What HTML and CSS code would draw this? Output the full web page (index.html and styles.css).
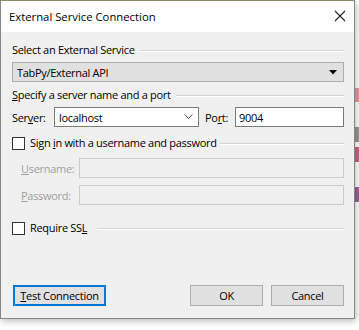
FILE: index.html
```html
<!DOCTYPE html>
<html>
<head>
<meta charset="utf-8">
<link rel="stylesheet" href="styles.css">
</head>
<body>
<div class="stage">
  <div class="window">
    <div class="titlebar">
      <span class="title">External Service Connection</span>
      <svg class="close" width="12" height="12" viewBox="0 0 12 12"><path d="M1 1 L11 11 M11 1 L1 11" stroke="#222" stroke-width="1.1" fill="none"/></svg>
    </div>
    <div class="content">
      <div class="group-head"><span>Select an External Service</span><span class="rule"></span></div>
      <div class="select">
        <span>TabPy/External API</span>
        <svg width="8" height="5" viewBox="0 0 8 5"><path d="M0 0 H8 L4 4.5 Z" fill="#000"/></svg>
      </div>
      <div class="group-head g2"><span><u>S</u>pecify a server name and a port</span><span class="rule"></span></div>
      <div class="server-row">
        <span class="lbl srv">Ser<u>v</u>er:</span>
        <div class="combo">
          <span>localhost</span>
          <svg width="9" height="6" viewBox="0 0 9 6"><path d="M0.5 0.5 L4.5 4.5 L8.5 0.5" stroke="#555" stroke-width="1" fill="none"/></svg>
        </div>
        <span class="lbl port">Po<u>r</u>t:</span>
        <div class="input port-input">9004</div>
      </div>
      <div class="check-head c1"><span class="box"></span><span>Sign <u>i</u>n with a username and password</span><span class="rule tight"></span></div>
      <div class="field-row f1"><span class="lbl dis"><u>U</u>sername:</span><div class="input disabled"></div></div>
      <div class="field-row f2"><span class="lbl dis"><u>P</u>assword:</span><div class="input disabled"></div></div>
      <div class="check-head c2"><span class="box"></span><span>Require SS<u>L</u></span><span class="rule wide"></span></div>
      <div class="buttons">
        <button class="btn focus"><u>T</u>est Connection</button>
        <span class="spacer"></span>
        <button class="btn ok">OK</button>
        <button class="btn">Cancel</button>
      </div>
    </div>
  </div>
  <div class="behind">
    <span class="stripe s1"></span>
    <span class="stripe s2"></span>
    <span class="stripe s3"></span>
    <span class="stripe s4"></span>
  </div>
</div>
</body>
</html>
```

FILE: styles.css
```css
html, body {
  margin: 0;
  padding: 0;
  background: #ffffff;
}
body {
  width: 359px;
  height: 330px;
  overflow: hidden;
  font-family: "Open Sans", "Noto Sans", sans-serif;
  font-size: 11px;
  letter-spacing: -0.3px;
  color: #000;
}
.stage {
  position: relative;
  width: 359px;
  height: 330px;
}
.window {
  position: relative;
  z-index: 1;
  width: 353px;
  height: 317px;
  border: 1px solid #858585;
  border-top-color: #8d8a6a;
  background: #f0f0f0;
  box-shadow: 1px 2px 7px rgba(0,0,0,0.28);
  display: flex;
  flex-direction: column;
}
.titlebar {
  height: 31px;
  background: #ffffff;
  display: flex;
  align-items: center;
  justify-content: space-between;
  padding: 0 8px 0 8px;
}
.title {
  font-size: 11.3px;
  letter-spacing: 0;
  margin-top: -1px;
}
.close {
  margin-top: -1px;
}
.content {
  flex: 1;
  padding: 0 10px 0 11px;
  display: flex;
  flex-direction: column;
}
.group-head, .check-head {
  display: flex;
  align-items: center;
  height: 16px;
  line-height: 16px;
  white-space: nowrap;
}
.group-head { margin-top: 10px; }
.group-head.g2 { margin-top: 5px; }
.rule {
  flex: 1;
  height: 0;
  border-top: 1px solid #d5d5d5;
  border-bottom: 1px solid #ffffff;
  margin-left: 5px;
  margin-top: 1px;
}
.rule.tight { margin-left: 3px; }
.rule.wide { margin-left: 10px; }
.select {
  margin-top: 4px;
  height: 18px;
  border: 1px solid #adadad;
  background: #e1e1e1;
  display: flex;
  align-items: center;
  justify-content: space-between;
  padding: 0 6px 0 4px;
}
.server-row {
  margin-top: 4px;
  display: flex;
  align-items: center;
  height: 20px;
}
.lbl {
  white-space: nowrap;
}
.lbl.srv {
  width: 42px;
  flex: none;
}
.combo {
  height: 18px;
  border: 1px solid #7a7a7a;
  background: #fff;
  display: flex;
  align-items: center;
  justify-content: space-between;
  padding: 0 5px 0 4px;
  flex: none;
  width: 134px;
}
.port {
  margin-left: 6px;
  width: 24px;
  flex: none;
}
.input {
  height: 18px;
  border: 1px solid #7a7a7a;
  background: #fff;
  display: flex;
  align-items: center;
  padding: 0 3px;
}
.port-input {
  flex: 1;
  margin-left: 6px;
}
.check-head.c1 { margin-top: 8px; }
.check-head.c2 { margin-top: 15px; }
.box {
  width: 11px;
  height: 11px;
  border: 1px solid #333;
  background: #fff;
  margin-right: 5px;
  flex: none;
}
.field-row {
  display: flex;
  align-items: center;
  height: 20px;
  padding-left: 9px;
}
.field-row.f1 { margin-top: 7px; }
.field-row.f2 { margin-top: 7px; }
.field-row .input {
  flex: 1;
}
.field-row .lbl {
  width: 58px;
  flex: none;
}
.dis { color: #a0a0a0; }
.input.disabled {
  border-color: #cccccc;
  background: #f0f0f0;
}
.buttons {
  margin-top: auto;
  margin-bottom: 12px;
  display: flex;
  align-items: center;
  padding-left: 1px;
}
.spacer { flex: 1; }
.btn {
  font-family: inherit;
  font-size: 11px;
  letter-spacing: -0.3px;
  height: 21px;
  border: 1px solid #adadad;
  background: #e1e1e1;
  padding: 0;
  margin: 0;
  color: #000;
  width: 73px;
}
.btn.ok { margin-right: 8px; }
.btn.focus {
  width: 93px;
  border: 2px solid #0078d7;
}
.behind {
  position: absolute;
  left: 355px;
  top: 0;
  width: 4px;
  height: 330px;
}
.stripe {
  position: absolute;
  left: 0;
  width: 4px;
}
.s1 { top: 88px; height: 14px; background: #e59aa3; }
.s2 { top: 127px; height: 15px; background: #9d9797; }
.s3 { top: 147px; height: 15px; background: #c5678a; }
.s4 { top: 187px; height: 15px; background: #9c6593; }
```
